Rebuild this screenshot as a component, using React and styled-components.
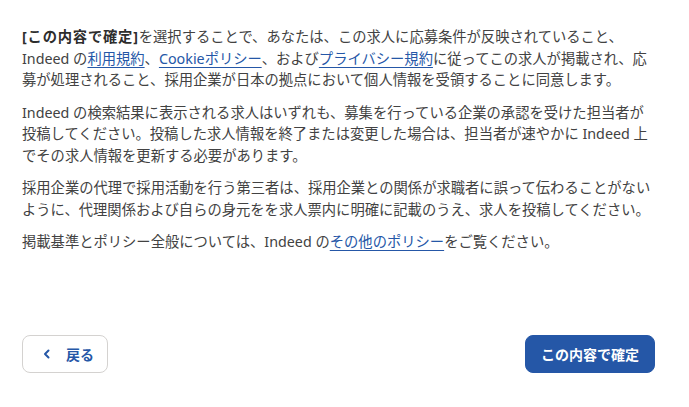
import styled, { createGlobalStyle } from "styled-components";

const GlobalStyle = createGlobalStyle`
  html, body {
    margin: 0;
    padding: 0;
    background: #ffffff;
  }

  body {
    font-family: "Noto Sans", "Noto Sans CJK JP", sans-serif;
    color: #424242;
  }
`;

const Page = styled.div`
  height: 407px;
  display: flex;
  flex-direction: column;
  box-sizing: border-box;
`;

const Content = styled.div`
  flex: 1;
  padding: 26px 34px 0 22px;
`;

const Para = styled.p`
  margin: 0 0 11px;
  font-size: 14.3px;
  line-height: 21.5px;
  color: #424242;

  strong {
    font-weight: 700;
    letter-spacing: 0.8px;
    color: #2d2d2d;
  }
`;

const Link = styled.a`
  color: #2557a7;
  text-decoration: underline;
  text-underline-offset: 3px;
  text-decoration-thickness: 1px;
  cursor: pointer;
`;

const Footer = styled.div`
  display: flex;
  justify-content: space-between;
  align-items: center;
  padding: 0 34px 34px 22px;
`;

const Button = styled.button`
  height: 38px;
  box-sizing: border-box;
  display: flex;
  align-items: center;
  gap: 11px;
  padding: ${(p) => (p.$primary ? "0 15px" : "0 13px 0 16px")};
  border-radius: 8px;
  font-family: "Noto Sans", "Noto Sans CJK JP", sans-serif;
  font-size: 14px;
  font-weight: 700;
  cursor: pointer;
  border: 1px solid ${(p) => (p.$primary ? "#2557a7" : "#d4d2d0")};
  background: ${(p) => (p.$primary ? "#2557a7" : "#ffffff")};
  color: ${(p) => (p.$primary ? "#ffffff" : "#2557a7")};
`;

const Chevron = () => (
  <svg width="16" height="16" viewBox="0 0 16 16" fill="none">
    <path
      d="M9.5 4.5 6 8l3.5 3.5"
      stroke="#2557a7"
      strokeWidth="2"
      strokeLinecap="round"
      strokeLinejoin="round"
    />
  </svg>
);

export default function App() {
  return (
    <Page>
      <GlobalStyle />
      <Content>
        <Para>
          <strong>[この内容で確定]</strong>
          を選択することで、あなたは、この求人に応募条件が反映されていること、
          <br />
          Indeed の<Link>利用規約</Link>、<Link>Cookieポリシー</Link>、および
          <Link>プライバシー規約</Link>
          に従ってこの求人が掲載され、応募が処理されること、採用企業が日本の拠点において個人情報を受領することに同意します。
        </Para>
        <Para>
          Indeed
          の検索結果に表示される求人はいずれも、募集を行っている企業の承認を受けた担当者が投稿してください。投稿した求人情報を終了または変更した場合は、担当者が速やかに
          Indeed 上でその求人情報を更新する必要があります。
        </Para>
        <Para>
          採用企業の代理で採用活動を行う第三者は、採用企業との関係が求職者に誤って伝わることがないように、代理関係および自らの身元をを求人票内に明確に記載のうえ、求人を投稿してください。
        </Para>
        <Para>
          掲載基準とポリシー全般については、Indeed の
          <Link>その他のポリシー</Link>をご覧ください。
        </Para>
      </Content>
      <Footer>
        <Button>
          <Chevron />
          戻る
        </Button>
        <Button $primary>この内容で確定</Button>
      </Footer>
    </Page>
  );
}
